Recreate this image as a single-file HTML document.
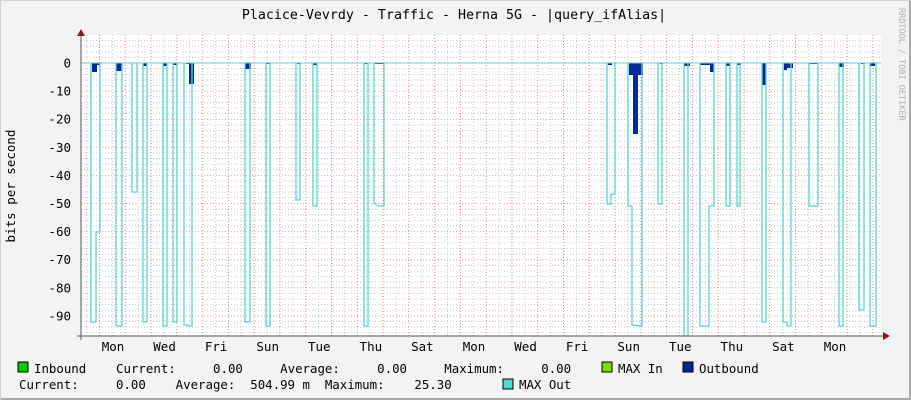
<!DOCTYPE html>
<html><head><meta charset="utf-8"><style>
html,body{margin:0;padding:0;background:#f3f3f3;}
svg{display:block;font-family:"DejaVu Sans Mono","Liberation Mono",monospace;}
</style></head><body>
<svg id="g" width="911" height="400" xmlns="http://www.w3.org/2000/svg">
<rect x="0" y="0" width="911" height="400" fill="#f3f3f3"/>
<rect x="909" y="0" width="2" height="400" fill="#a8a8a8"/>
<rect x="0" y="398" width="911" height="2" fill="#a8a8a8"/>
<rect x="0" y="0" width="911" height="1" fill="#d0d0d0"/>
<rect x="0" y="0" width="1" height="400" fill="#d0d0d0"/>
<rect x="81" y="35" width="800" height="301" fill="#ffffff"/>
<g id="grid"></g>
<g id="data"></g>
<text x="454" y="19" font-size="13.3" text-anchor="middle" fill="#000">Placice-Vevrdy - Traffic - Herna 5G - |query_ifAlias|</text>
<text transform="translate(15,186) rotate(-90)" font-size="12.5" text-anchor="middle" fill="#000">bits per second</text>
<text transform="translate(899,8) rotate(90)" font-size="8.5" fill="#b0b0b0">RRDTOOL / TOBI OETIKER</text>
<g id="ylab" font-size="12.5" text-anchor="end" fill="#000"></g>
<g id="xlab" font-size="12.5" text-anchor="middle" fill="#000"></g>
<line x1="81" y1="30" x2="81" y2="340" stroke="#555" stroke-width="1"/>
<line x1="77" y1="336" x2="886" y2="336" stroke="#555" stroke-width="1"/>
<polygon points="77,36 85,36 81,29" fill="#8b1a1a"/>
<polygon points="883,332 883,340 890,336" fill="#8b1a1a"/>
<g font-size="12.4" fill="#000">
<rect x="18" y="362" width="10" height="10" fill="#00cc00" stroke="#000" stroke-width="1"/>
<text x="34" y="373" xml:space="preserve">Inbound    Current:     0.00     Average:     0.00     Maximum:     0.00</text>
<rect x="602" y="362" width="10" height="10" fill="#7fdc00" stroke="#000" stroke-width="1"/>
<text x="618" y="373">MAX In</text>
<rect x="683" y="362" width="10" height="10" fill="#002a97" stroke="#000" stroke-width="1"/>
<text x="699" y="373">Outbound</text>
<text x="19" y="389" xml:space="preserve">Current:     0.00    Average:  504.99 m  Maximum:    25.30</text>
<rect x="503" y="379" width="10" height="10" fill="#55d6d3" stroke="#000" stroke-width="1"/>
<text x="519" y="389">MAX Out</text>
</g>
</svg>
<script>
var NS="http://www.w3.org/2000/svg";
function el(p,t,a){var e=document.createElementNS(NS,t);for(var k in a)e.setAttribute(k,a[k]);p.appendChild(e);return e;}
var grid=document.getElementById('grid'),data=document.getElementById('data');
var Y0=63,S=2.81;
function yv(v){return Y0-v*S;}
for(var v=10;v>=-96;v-=2){var y=yv(v);if(y<35||y>336)continue;
 if(v%10===0) el(grid,'line',{x1:81,x2:881,y1:y,y2:y,stroke:'#f08080','stroke-width':1,'stroke-dasharray':'1,2','stroke-opacity':0.8});
 else el(grid,'line',{x1:81,x2:881,y1:y,y2:y,stroke:'#c8c8c8','stroke-width':1,'stroke-dasharray':'1,2'});}
for(var k=-2;k<70;k++){var x=99.5+k*12.89;if(x<82||x>881)continue;
 var red=(k%2===0);
 el(grid,'line',{x1:x,x2:x,y1:35,y2:336,stroke:red?'#f08080':'#c8c8c8','stroke-width':1,'stroke-dasharray':'1,2'});}
var yl=document.getElementById('ylab');
for(var v=0;v>=-90;v-=10){var t=el(yl,'text',{x:71,y:yv(v)+4.5});t.textContent=v;}
var xl=document.getElementById('xlab');
var days=['Mon','Wed','Fri','Sun','Tue','Thu','Sat','Mon','Wed','Fri','Sun','Tue','Thu','Sat','Mon'];
days.forEach(function(d,i){var t=el(xl,'text',{x:113+i*51.57,y:351});t.textContent=d;});
var ob=[[92,97,72],[97,100,65],[116,122,71],[143,147,66],[163,167,66],[173,177,65],[186,189,64],[189,194,84],[245,251,69],[266,270,64],[297,301,64],[313,317,65],[364,368,64],[375,384,64],[608,612,65],[629,643,75],[633,638,134],[660,663,64],[684,690,66],[700,711,65],[710,714,72],[726,730,66],[737,741,65],[762,766,85],[784,787,70],[787,793,68],[809,818,64],[839,844,67],[861,865,64],[870,875,66]];
ob.forEach(function(b){el(data,'rect',{x:b[0],y:63,width:b[1]-b[0],height:b[2]-63,fill:'#002a97'});});
el(data,'line',{x1:81,x2:881,y1:63,y2:63,stroke:'#55d6d3','stroke-width':1});
var pulses=[
 [[91,63],[91,322],[96,322],[96,232],[100,232],[100,63]],
 [[116,63],[116,326],[122,326],[122,63]],
 [[132,63],[132,192],[137,192],[137,63]],
 [[143,63],[143,322],[147,322],[147,63]],
 [[163,63],[163,326],[167,326],[167,63]],
 [[173,63],[173,322],[177,322],[177,63]],
 [[184,63],[184,325],[188,325],[188,326],[192,326],[192,63]],
 [[245,63],[245,322],[250,322],[250,63]],
 [[266,63],[266,326],[270,326],[270,63]],
 [[296,63],[296,200],[300,200],[300,63]],
 [[313,63],[313,206],[317,206],[317,63]],
 [[364,63],[364,326],[368,326],[368,63]],
 [[374,63],[374,203],[378,206],[384,206],[384,63]],
 [[607,63],[607,204],[611,204],[611,194],[615,194],[615,63]],
 [[628,63],[628,206],[632,206],[632,325],[642,326],[642,63]],
 [[658,63],[658,204],[662,204],[662,63]],
 [[684,63],[684,336],[688,336],[688,63]],
 [[700,63],[700,326],[709,326],[709,206],[714,206],[714,63]],
 [[726,63],[726,206],[730,206],[730,63]],
 [[737,63],[737,206],[740,206],[740,63]],
 [[762,63],[762,322],[766,322],[766,63]],
 [[783,63],[783,322],[787,322],[787,326],[791,326],[791,63]],
 [[809,63],[809,206],[818,206],[818,63]],
 [[839,63],[839,326],[843,326],[843,63]],
 [[859,63],[859,310],[864,310],[864,63]],
 [[870,63],[870,326],[876,326],[876,63]]
];
pulses.forEach(function(p){el(data,'polyline',{points:p.map(function(q){return q.join(',');}).join(' '),fill:'none',stroke:'#55d6d3','stroke-width':1.3});});
</script>
</body></html>
